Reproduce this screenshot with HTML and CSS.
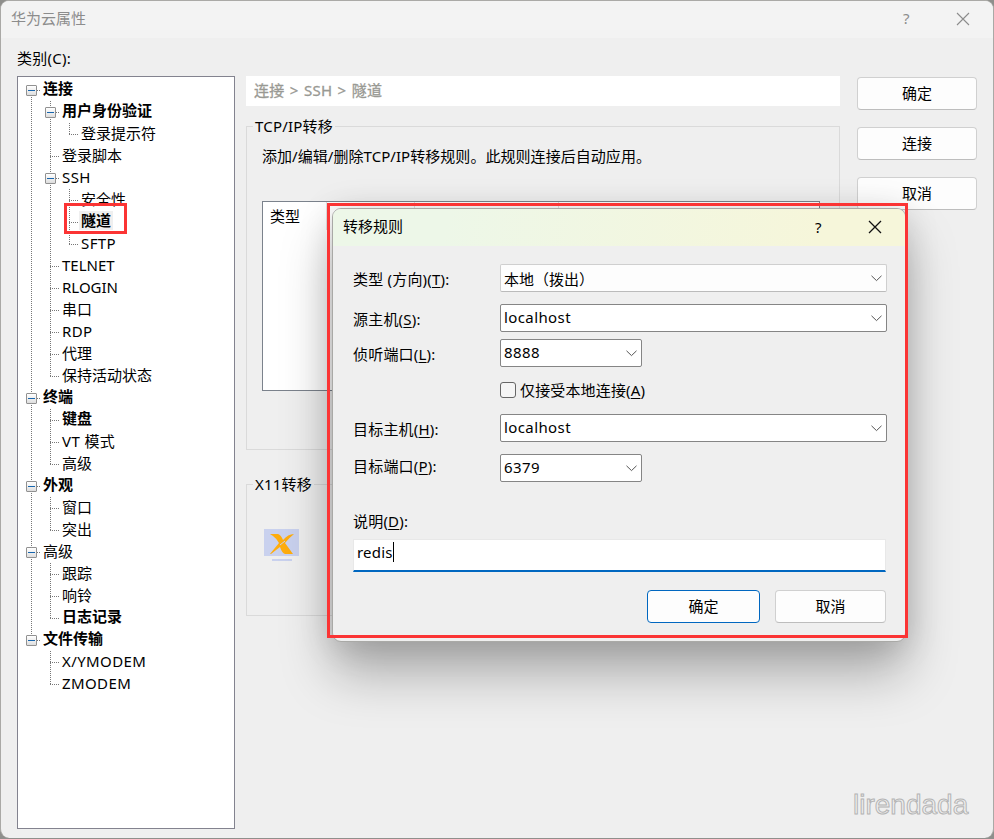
FILE: index.html
```html
<!DOCTYPE html>
<html lang="zh-CN">
<head>
<meta charset="utf-8">
<title>华为云属性</title>
<link rel="stylesheet" href="styles.css">
</head>
<body>
<div class="window">
  <header class="titlebar">
    <span class="title">华为云属性</span>
    <span class="help">?</span>
    <svg class="close" width="14" height="14" viewBox="0 0 14 14"><path d="M1 1L13 13M13 1L1 13"/></svg>
  </header>
  <main class="body">
    <section class="sidebar">
      <div class="category">类别(C):</div>
      <ul class="tree">
        <li><div class="row"><i class="box"></i><b>连接</b></div>
          <ul>
            <li><div class="row"><i class="box"></i><b>用户身份验证</b></div>
              <ul>
                <li><div class="row">登录提示符</div></li>
              </ul>
            </li>
            <li><div class="row">登录脚本</div></li>
            <li><div class="row latin"><i class="box"></i>SSH</div>
              <ul>
                <li><div class="row">安全性</div></li>
                <li><div class="row"><b class="selected">隧道</b></div></li>
                <li><div class="row latin">SFTP</div></li>
              </ul>
            </li>
            <li><div class="row">TELNET</div></li>
            <li><div class="row">RLOGIN</div></li>
            <li><div class="row">串口</div></li>
            <li><div class="row latin">RDP</div></li>
            <li><div class="row">代理</div></li>
            <li><div class="row">保持活动状态</div></li>
          </ul>
        </li>
        <li><div class="row"><i class="box"></i><b>终端</b></div>
          <ul>
            <li><div class="row"><b>键盘</b></div></li>
            <li><div class="row latin">VT 模式</div></li>
            <li><div class="row">高级</div></li>
          </ul>
        </li>
        <li><div class="row"><i class="box"></i><b>外观</b></div>
          <ul>
            <li><div class="row">窗口</div></li>
            <li><div class="row">突出</div></li>
          </ul>
        </li>
        <li><div class="row"><i class="box"></i>高级</div>
          <ul>
            <li><div class="row">跟踪</div></li>
            <li><div class="row">响铃</div></li>
            <li><div class="row"><b>日志记录</b></div></li>
          </ul>
        </li>
        <li><div class="row"><i class="box"></i><b>文件传输</b></div>
          <ul>
            <li><div class="row latin">X/YMODEM</div></li>
            <li><div class="row latin">ZMODEM</div></li>
          </ul>
        </li>
      </ul>
    </section>
    <section class="page">
      <div class="crumbs">连接 &gt; SSH &gt; 隧道</div>
      <div class="group tcp">
        <span class="legend">TCP/IP转移</span>
        <p>添加/编辑/删除TCP/IP转移规则。此规则连接后自动应用。</p>
        <div class="list"><span>类型</span><span></span><span></span></div>
      </div>
      <div class="group x11">
        <span class="legend">X11转移</span>
        <svg class="x-icon" width="36" height="34" viewBox="0 0 36 34">
          <path fill="#c9d1ee" d="M0 0h35v27H0zM8 30h20v2H8z"/>
          <path fill="#ffad0d" d="M6 5h8q3 1 5 6Q24 5 30 5q-5 4-9 9 3 4 8 11h-8q-3-1-5-7-4 3-9 7H6q4-5 9-11-3-5-6-7z"/>
          <path fill="none" stroke="#c9d1ee" d="M21 12l-5 4"/>
        </svg>
      </div>
    </section>
    <aside class="actions">
      <button>确定</button>
      <button>连接</button>
      <button>取消</button>
    </aside>
  </main>
</div>

<div class="dialog">
  <header class="dialog-title">
    <span class="title">转移规则</span>
    <span class="help">?</span>
    <svg class="close" width="14" height="14" viewBox="0 0 14 14"><path d="M1 1L13 13M13 1L1 13"/></svg>
  </header>
  <div class="form">
    <label class="r1">类型 (方向)(<u>T</u>):</label>
    <div class="combo flat"><span>本地（拨出）</span><svg width="11" height="7" viewBox="0 0 11 7"><path d="M.5 .8L5.5 5.6L10.5 .8"/></svg></div>
    <label class="r2">源主机(<u>S</u>):</label>
    <div class="combo"><span>localhost</span><svg width="11" height="7" viewBox="0 0 11 7"><path d="M.5 .8L5.5 5.6L10.5 .8"/></svg></div>
    <label class="r3">侦听端口(<u>L</u>):</label>
    <div class="combo short"><span>8888</span><svg width="11" height="7" viewBox="0 0 11 7"><path d="M.5 .8L5.5 5.6L10.5 .8"/></svg></div>
    <div class="check"><i></i><span>仅接受本地连接(<u>A</u>)</span></div>
    <label class="r5">目标主机(<u>H</u>):</label>
    <div class="combo"><span>localhost</span><svg width="11" height="7" viewBox="0 0 11 7"><path d="M.5 .8L5.5 5.6L10.5 .8"/></svg></div>
    <label class="r6">目标端口(<u>P</u>):</label>
    <div class="combo short"><span>6379</span><svg width="11" height="7" viewBox="0 0 11 7"><path d="M.5 .8L5.5 5.6L10.5 .8"/></svg></div>
  </div>
  <div class="desc-label">说明(<u>D</u>):</div>
  <div class="desc"><span>redis</span><i class="caret"></i></div>
  <div class="buttons"><button class="primary">确定</button><button>取消</button></div>
</div>

<div class="mark mark-tree"></div>
<div class="mark mark-dialog"></div>
<div class="watermark">lirendada</div>
</body>
</html>
```
FILE: styles.css
```css
* { box-sizing: border-box; }
body {
  margin: 0;
  width: 994px;
  height: 839px;
  overflow: hidden;
  position: relative;
  background: #8f8f8c;
  font: 15px/22px "Noto Sans", "Noto Sans CJK SC", sans-serif;
  color: #000;
}
ul { list-style: none; margin: 0; padding: 0; }
p { margin: 0; letter-spacing: .05px; }
u { text-underline-offset: 2px; text-decoration-thickness: 1px; }

.window {
  width: 994px;
  height: 838px;
  border: 1px solid #aaa9a6;
  border-bottom: 0;
  border-radius: 9px;
  background: #efefef;
  overflow: hidden;
}
.titlebar {
  height: 37px;
  display: flex;
  align-items: center;
  padding: 0 23px 2px 10px;
  background: #f3f3f3;
  color: #8c8c8c;
}
.title { flex: 1; margin-top: -2px; }
.help { width: 8px; margin: -2px 45px 0 0; }
.close path { fill: none; stroke: #8c8c8c; stroke-width: 1.1; }

.body { display: flex; padding-left: 16px; }
.sidebar { width: 218px; }
.category { height: 38px; padding-top: 9px; letter-spacing: .25px; }
.tree {
  height: 753px;
  padding: 2px 0 0 8px;
  border: 1px solid #83838f;
  background: #fff;
}
.tree ul { padding-left: 19px; }
.tree li { position: relative; }
.tree li::before {
  content: "";
  position: absolute;
  left: 5px;
  top: 0;
  bottom: 0;
  width: 1px;
  background: repeating-linear-gradient(#777 0 1px, transparent 1px 2px);
}
.tree li:last-child::before { bottom: auto; height: 12px; }
.tree > li:first-child::before { top: 12px; }
.row {
  position: relative;
  height: 22px;
  line-height: 21px;
  padding-left: 17px;
  white-space: nowrap;
}
.row::before {
  content: "";
  position: absolute;
  left: 5px;
  top: 11px;
  width: 10px;
  height: 1px;
  background: repeating-linear-gradient(90deg, #777 0 1px, transparent 1px 2px);
}
.row b { display: block; line-height: 19px; }
.latin { letter-spacing: .4px; }
.box {
  position: absolute;
  left: 0;
  top: 6px;
  width: 11px;
  height: 11px;
  border: 1px solid #919191;
  border-radius: 1px;
  background: linear-gradient(#1765ad, #1765ad) center / 7px 1px no-repeat, linear-gradient(#fff, #dedede);
}
.row .selected {
  width: 34px;
  margin-left: -2px;
  padding-left: 2px;
  background: #efefef;
}

.page { width: 594px; margin-left: 11px; padding-top: 38px; }
.crumbs {
  height: 30px;
  padding-left: 8px;
  line-height: 29px;
  background: #fff;
  color: #999993;
  letter-spacing: .3px;
  word-spacing: 1px;
  -webkit-text-stroke: .3px #999993;
}
.group { position: relative; border: 1px solid #dadada; }
.tcp { height: 324px; margin-top: 20px; padding: 18px 19px 0 15px; }
.x11 { height: 132px; margin-top: 34px; }
.legend {
  position: absolute;
  left: 6px;
  top: -12px;
  padding: 0 2px;
  background: #efefef;
  letter-spacing: .2px;
}
.list {
  display: flex;
  width: 558px;
  height: 190px;
  margin-top: 34px;
  border: 1px solid #7b828c;
  background: #fff;
}
.list span { height: 28px; padding: 3px 7px; border-right: 1px solid #e0e0e0; }
.list span:nth-child(1) { width: 64px; }
.list span:nth-child(2) { width: 88px; }
.list span:nth-child(3) { width: 144px; }
.x-icon { display: block; margin: 44px 0 0 17px; }

.actions {
  width: 120px;
  margin-left: 17px;
  padding-top: 39px;
  display: flex;
  flex-direction: column;
  gap: 17px;
}
button {
  height: 33px;
  padding: 0 0 1px;
  border: 1px solid #d0d0d0;
  border-bottom-color: #bdbdbd;
  border-radius: 4px;
  background: #fdfdfd;
  font: inherit;
  color: inherit;
}

.dialog {
  position: absolute;
  left: 332px;
  top: 208px;
  width: 574px;
  height: 434px;
  border: 1px solid #a9a9a6;
  border-radius: 9px;
  background: #efefef;
  box-shadow: 0 32px 52px rgba(0, 0, 0, .28), 0 3px 34px rgba(0, 0, 0, .15);
}
.dialog-title {
  height: 37px;
  display: flex;
  align-items: center;
  padding: 0 23px 0 10px;
  border-radius: 8px 8px 0 0;
  background: linear-gradient(100deg, #edf7e8 0 20%, #f6f6da 85%);
}
.dialog-title .title { margin-top: -3px; }
.dialog-title .close { margin-top: -1px; }
.dialog-title .close path { stroke: #111; stroke-width: 1.3; }
.form {
  display: grid;
  grid-template-columns: 147px 387px;
  grid-template-rows: 40px 35px 37px 38px 40px 40px;
  padding: 18px 0 0 20px;
}
label { padding-top: 4px; letter-spacing: .2px; }
.r1, .r2 { padding-top: 4px; }
.r6 { padding-top: 1px; }
.combo {
  display: flex;
  align-items: center;
  justify-content: space-between;
  height: 28px;
  padding: 0 4px 0 3px;
  border: 1px solid #858585;
  border-radius: 2px;
  background: #fff;
}
.combo span { margin-top: -2px; letter-spacing: .4px; }
.combo path { fill: none; stroke: #555; }
.combo.flat { border-color: #cfcfcf #cfcfcf #bbb; background: #fdfdfd; }
.combo.flat span { margin-top: 1px; letter-spacing: 0; }
.combo.short { width: 142px; }
.check { grid-column: 2; display: flex; gap: 4px; padding-top: 4px; }
.check i {
  width: 16px;
  height: 16px;
  margin-top: 2px;
  border: 1px solid #666;
  border-radius: 3px;
  background: #f5f5f5;
}
.check span { margin-top: -1px; letter-spacing: .15px; }
.desc-label { margin: 16px 0 0 20px; letter-spacing: .2px; }
.desc {
  display: flex;
  width: 533px;
  height: 33px;
  margin: 7px 0 0 20px;
  padding: 2px 3px;
  border: 1px solid #e8e8e8;
  border-bottom: 2px solid #0067c0;
  background: #fff;
}
.desc span { margin-top: -1px; letter-spacing: .2px; }
.caret { width: 1px; height: 20px; background: #000; }
.buttons { display: flex; justify-content: flex-end; gap: 15px; margin: 18px 19px 0 0; }
.buttons button { width: 111px; }
.buttons .primary { width: 113px; border-color: #0067c0; }

.mark { position: absolute; border: 3px solid #fb3434; }
.mark-tree { left: 64px; top: 203px; width: 63px; height: 31px; }
.mark-dialog { left: 327px; top: 203px; width: 581px; height: 435px; }
.watermark {
  position: absolute;
  left: 853px;
  top: 789px;
  font: 28px/32px "Liberation Sans", sans-serif;
  color: #efefef;
  -webkit-text-stroke: 1px #b4b4b4;
}
```
